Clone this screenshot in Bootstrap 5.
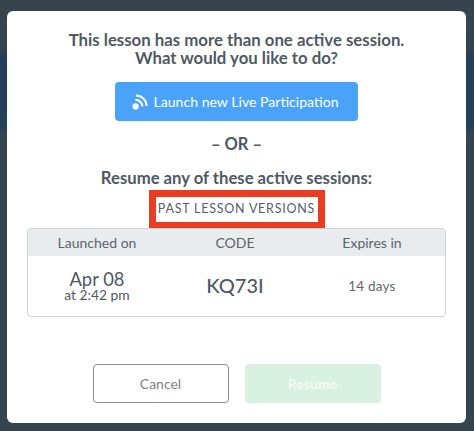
<!DOCTYPE html>
<html lang="en">
<head>
<meta charset="utf-8">
<title>Sessions</title>
<link rel="stylesheet" href="https://cdn.jsdelivr.net/npm/bootstrap@5.3.0/dist/css/bootstrap.min.css">
<style>
html,body{height:431px;overflow:hidden}
body{background:linear-gradient(#36444e 0,#34444f 48px,#22405a 58px,#22405a 125px,#34454f 136px,#34454f 100%);font-family:"Lato","Noto Sans",sans-serif;color:#4e5a63}
.sheet{width:459px;height:412px;margin:11px 0 0 7px;padding:20px 20px 0;background:#fff;border-radius:6px;flex-direction:column}
.ask{font-size:16.8px;line-height:17.5px;font-weight:700;color:#4f5a64;margin:0 0 16px}
.live{width:243px;height:39px;font-size:14.1px;font-weight:400;background:#4aa3f8;border:0;color:#fff;border-radius:4px;padding:0}
.live:hover{background:#4aa3f8;color:#fff}
.ors{font-size:16.5px;font-weight:700;line-height:20px;margin:13px 0 14px}
.res{font-size:16.7px;font-weight:700;line-height:20px;margin:0 0 2px}
.tagbox{border:7px solid #ea3c20;width:176px;height:39px;font-size:12.5px;letter-spacing:.77px;color:#566069;line-height:24px;white-space:nowrap;margin-bottom:-1px}
.sesh{width:419px;height:89px;border:1px solid #ced3d7;border-radius:4px;overflow:hidden}
.sesh-h{height:27px;background:#e9ecef;font-size:14px;color:#59646c;line-height:27px}
.sesh-b{height:60px;align-items:center;color:#4f5a63}
.cola,.colb{width:138px}.colc{width:141px;padding-right:5px}
.day{font-size:18.4px;line-height:17px}
.tm{font-size:13.8px;line-height:14px}
.code{font-size:20px;font-weight:500;margin-top:-2px}
.left{font-size:13.5px;color:#5d6870;letter-spacing:.2px}
.acts{gap:16px;margin-top:47px}
.acts .btn{width:136px;height:39px;font-size:14px;padding:0;border-radius:4px}
.can{background:#fff;border:1px solid #8a8f93;color:#7e8488}
.can:hover{background:#fff;color:#7e8488}
.go{background:#d9f1e2;border:0;color:#f1faf4;font-weight:700}
.go:hover{background:#d9f1e2;color:#f1faf4}
.ri{width:16px;height:16px;vertical-align:-3px;margin-right:5px;margin-left:-2px}
</style>
</head>
<body>
<div class="sheet d-flex align-items-center text-center">
  <p class="ask">This lesson has more than one active session.<br>What would you like to do?</p>
  <button type="button" class="btn live">
    <svg class="ri" viewBox="0 0 16 16" fill="none" stroke="#fff" aria-hidden="true"><circle cx="3.6" cy="12.4" r="3.1" fill="#fff" stroke="none"/><path d="M3.4 5.7a6.9 6.9 0 0 1 6.9 6.9" stroke-width="2"/><path d="M4 1.5a10.6 10.6 0 0 1 10.6 10.6" stroke-width="2"/></svg>Launch new Live Participation
  </button>
  <div class="ors">– OR –</div>
  <div class="res">Resume any of these active sessions:</div>
  <div class="tagbox">PAST LESSON VERSIONS</div>
  <div class="sesh">
    <div class="sesh-h d-flex"><div class="cola">Launched on</div><div class="colb">CODE</div><div class="colc">Expires in</div></div>
    <div class="sesh-b d-flex">
      <div class="cola"><div class="day">Apr 08</div><div class="tm">at 2:42 pm</div></div>
      <div class="colb code">KQ73I</div>
      <div class="colc left">14 days</div>
    </div>
  </div>
  <div class="acts d-flex">
    <button type="button" class="btn can">Cancel</button>
    <button type="button" class="btn go">Resume</button>
  </div>
</div>
<script src="https://cdn.jsdelivr.net/npm/bootstrap@5.3.0/dist/js/bootstrap.bundle.min.js"></script>
</body>
</html>
